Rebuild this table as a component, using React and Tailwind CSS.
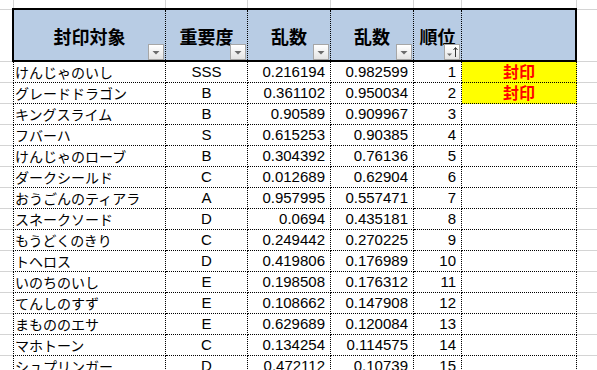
import React from "react";

const rows = [
  ["けんじゃのいし", "SSS", "0.216194", "0.982599", "1", true],
  ["グレードドラゴン", "B", "0.361102", "0.950034", "2", true],
  ["キングスライム", "B", "0.90589", "0.909967", "3"],
  ["フバーハ", "S", "0.615253", "0.90385", "4"],
  ["けんじゃのローブ", "B", "0.304392", "0.76136", "5"],
  ["ダークシールド", "C", "0.012689", "0.62904", "6"],
  ["おうごんのティアラ", "A", "0.957995", "0.557471", "7"],
  ["スネークソード", "D", "0.0694", "0.435181", "8"],
  ["もうどくのきり", "C", "0.249442", "0.270225", "9"],
  ["トヘロス", "D", "0.419806", "0.176989", "10"],
  ["いのちのいし", "E", "0.198508", "0.176312", "11"],
  ["てんしのすず", "E", "0.108662", "0.147908", "12"],
  ["まもののエサ", "E", "0.629689", "0.120084", "13"],
  ["マホトーン", "C", "0.134254", "0.114575", "14"],
  ["シュプリンガー", "D", "0.472112", "0.10739", "15"],
];

function FilterBtn({ sort }) {
  return (
    <div className="absolute bottom-0 right-px w-[16px] h-[16px] border border-[#a6a6a6] bg-gradient-to-b from-white to-[#e4e4e4]">
      {sort ? (
        <svg width="14" height="14" viewBox="0 0 14 14" className="block">
          <path d="M2 8.5 L7 8.5 L4.5 11 Z" fill="#6b6b6b" />
          <path d="M10.5 3 L10.5 12" stroke="#333" strokeWidth="1" />
          <path d="M8.5 5 L10.5 2.5 L12.5 5" stroke="#333" strokeWidth="1" fill="none" />
        </svg>
      ) : (
        <svg width="14" height="14" viewBox="0 0 14 14" className="block">
          <path d="M3.5 6 L10.5 6 L7 9.5 Z" fill="#6b6b6b" />
        </svg>
      )}
    </div>
  );
}

const numFont = "font-['Liberation_Sans','Noto_Sans_CJK_JP',sans-serif] text-[15px]";
const jpFont = "font-['Noto_Sans_CJK_JP',sans-serif]";

export default function App() {
  return (
    <div className="w-[597px] h-[370px] overflow-hidden bg-white text-black">
      {/* row 0 */}
      <div className="flex h-[8px]">
        <div className="w-[13px] shrink-0" />
        <div className="w-[153px] shrink-0 border-l border-r border-[#d4d4d4]" />
        <div className="w-[82px] shrink-0 border-r border-[#d4d4d4]" />
        <div className="w-[83px] shrink-0 border-r border-[#d4d4d4]" />
        <div className="w-[83px] shrink-0 border-r border-[#d4d4d4]" />
        <div className="w-[48px] shrink-0 border-r border-[#d4d4d4]" />
        <div className="w-[115px] shrink-0 border-r border-[#d4d4d4]" />
        <div className="flex-1" />
      </div>
      {/* header */}
      <div className="flex h-[54px]">
        <div className="w-[12px] shrink-0 flex flex-col">
          <div className="mt-px border-t border-[#d4d4d4]" />
          <div className="flex-1 border-b border-[#d4d4d4]" />
        </div>
        <div className={`w-[565px] shrink-0 flex border-2 border-black bg-[#b8cce4] ${jpFont} font-bold text-[18px]`}>
          <div className="relative w-[152px] shrink-0 border-r border-dotted border-black flex items-center justify-center pt-[3px]">
            封印対象
            <FilterBtn />
          </div>
          <div className="relative w-[82px] shrink-0 border-r border-dotted border-black flex items-center justify-center pt-[3px]">
            重要度
            <FilterBtn />
          </div>
          <div className="relative w-[83px] shrink-0 border-r border-dotted border-black flex items-center justify-center pt-[3px]">
            乱数
            <FilterBtn />
          </div>
          <div className="relative w-[83px] shrink-0 border-r border-dotted border-black flex items-center justify-center pt-[3px]">
            乱数
            <FilterBtn />
          </div>
          <div className="relative w-[48px] shrink-0 border-r border-dotted border-black flex items-center justify-center pt-[3px]">
            順位
            <FilterBtn sort />
          </div>
          <div className="flex-1" />
        </div>
        <div className="flex-1 flex flex-col">
          <div className="mt-px border-t border-[#d4d4d4]" />
          <div className="flex-1 border-b border-[#d4d4d4]" />
        </div>
      </div>
      {/* body */}
      {rows.map((r, i) => (
        <div key={i} className="flex h-[21px]">
          <div className="w-[13px] shrink-0 border-b border-[#d4d4d4]" />
          <div className={`w-[153px] shrink-0 border-l border-r border-b border-dotted border-black pl-px ${jpFont} text-[14px] leading-[20px] whitespace-nowrap overflow-hidden`}>
            {r[0]}
          </div>
          <div className={`w-[82px] shrink-0 border-r border-b border-dotted border-black text-center leading-[20px] ${numFont}`}>
            {r[1]}
          </div>
          <div className={`w-[83px] shrink-0 border-r border-b border-dotted border-black text-right pr-[5px] leading-[20px] ${numFont}`}>
            {r[2]}
          </div>
          <div className={`w-[83px] shrink-0 border-r border-b border-dotted border-black text-right pr-[5px] leading-[20px] ${numFont}`}>
            {r[3]}
          </div>
          <div className={`w-[48px] shrink-0 border-r border-b border-dotted border-black text-right pr-[5px] leading-[20px] ${numFont}`}>
            {r[4]}
          </div>
          <div
            className={`w-[115px] shrink-0 border-r border-b border-dotted border-black text-center ${jpFont} font-bold text-[16px] leading-[19px] text-[#ff0000] ${r[5] ? "bg-[#ffff00]" : ""}`}
          >
            {r[5] ? "封印" : ""}
          </div>
          <div className="flex-1 border-b border-[#d4d4d4]" />
        </div>
      ))}
    </div>
  );
}
